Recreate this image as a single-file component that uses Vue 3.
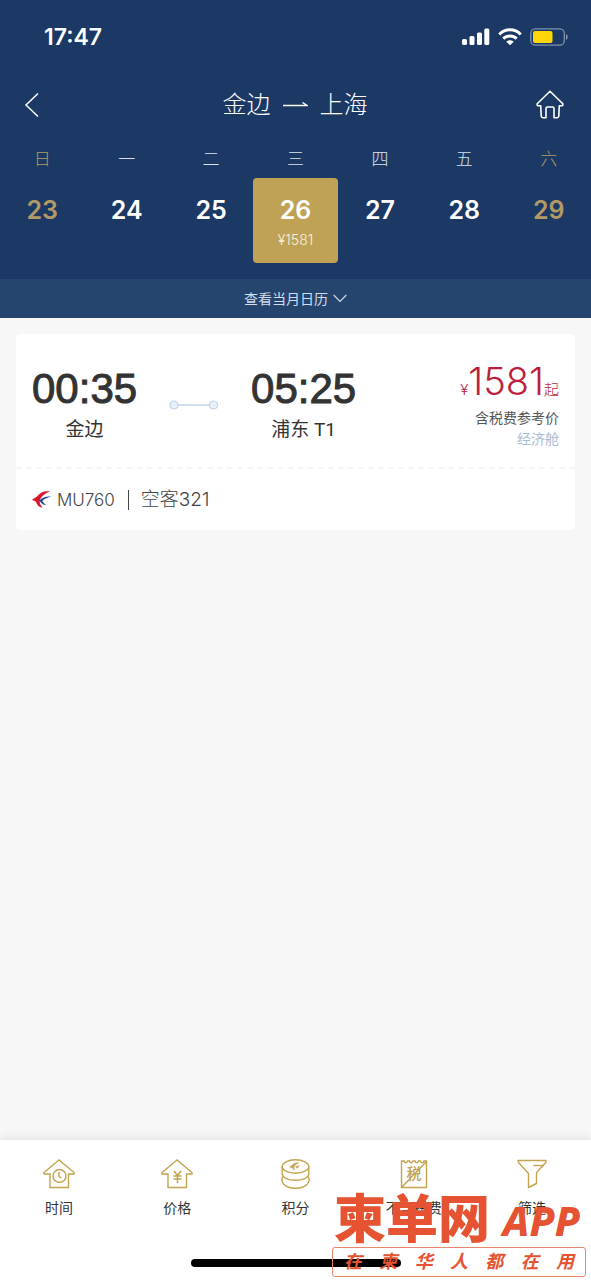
<script setup>
const days = [
  { week: '日', date: 23, weekend: true },
  { week: '一', date: 24 },
  { week: '二', date: 25 },
  { week: '三', date: 26, price: '¥1581', selected: true },
  { week: '四', date: 27 },
  { week: '五', date: 28 },
  { week: '六', date: 29, weekend: true }
]
const slogan = ['在', '柬', '华', '人', '都', '在', '用']
</script>

<template>
  <div class="page">
    <header class="top">
      <div class="status">
        <span class="clock">17:47</span>
        <span class="signals">
          <svg width="28" height="18" viewBox="0 0 28 18" fill="#fff">
            <rect x="0" y="11" width="5" height="6" rx="1.5" />
            <rect x="7.5" y="8" width="5" height="9" rx="1.5" />
            <rect x="15" y="4.500" width="5" height="12.500" rx="1.5" />
            <rect x="22.300" y="0.500" width="5" height="16.500" rx="1.5" />
          </svg>
          <svg width="24" height="18" viewBox="0 0 24 18" fill="none" stroke="#fff" stroke-width="3">
            <path d="M1.300 6.500C7.300 .3 16.700 .3 22.700 6.500" />
            <path d="M5.300 10.600C9 7 15 7 18.700 10.600" />
            <path d="M8.300 13.700C10.500 11.700 13.500 11.700 15.700 13.700L12 17.300Z" fill="#fff" stroke="none" />
          </svg>
          <svg width="39" height="18" viewBox="0 0 39 18">
            <rect x="0.800" y="0.800" width="33.500" height="16.400" rx="4.500" fill="none" stroke="#8091ac" stroke-width="1.300" />
            <rect x="3" y="3" width="19.500" height="12" rx="2" fill="#ffd60a" />
            <path d="M36 6C38.300 7 38.300 11 36 12Z" fill="#8091ac" />
          </svg>
        </span>
      </div>

      <nav class="nav">
        <button class="icon-button" type="button" aria-label="返回">
          <svg width="16" height="26" viewBox="0 0 16 26" fill="none" stroke="#fff" stroke-width="1.500">
            <path d="M14 1.500L2 13L14 24.500" />
          </svg>
        </button>
        <h1 class="title">
          <span>金边</span>
          <svg width="25" height="12" viewBox="0 0 25 12" fill="none" stroke="#fff" stroke-width="1.400">
            <path d="M0 6.500H24L19.500 3.500" />
          </svg>
          <span>上海</span>
        </h1>
        <button class="icon-button" type="button" aria-label="首页">
          <svg width="28" height="29" viewBox="0 0 28 29" fill="none" stroke="#fff" stroke-width="1.600" stroke-linejoin="round">
            <path d="M14 1.200L1.200 13.700Q.7 16 3 15.700H4.700L5.200 26Q5.300 27.700 7 27.700H10V18.500Q10 17 11.500 17H16.500Q18 17 18 18.500V27.700H21Q22.700 27.700 22.800 26L23.300 15.700H25Q27.300 16 26.800 13.700Z" />
          </svg>
        </button>
      </nav>

      <div class="calendar">
        <div v-for="day in days" :key="day.date" class="column">
          <span class="week" :class="{ gold: day.weekend }">{{ day.week }}</span>
          <button class="day" :class="{ gold: day.weekend, selected: day.selected }" type="button">
            <span class="date">{{ day.date }}</span>
            <span v-if="day.price" class="day-price">{{ day.price }}</span>
          </button>
        </div>
      </div>

      <button class="month" type="button">
        <span>查看当月日历</span>
        <svg width="14" height="9" viewBox="0 0 14 9" fill="none" stroke="#d3dcea" stroke-width="1.100">
          <path d="M.7 1L7 7.500L13.300 1" />
        </svg>
      </button>
    </header>

    <main class="results">
      <article class="flight">
        <div class="journey">
          <div class="stop">
            <span class="time">00:35</span>
            <span class="place">金边</span>
          </div>
          <svg class="route" width="50" height="10" viewBox="0 0 50 10" fill="#e8f1fb" stroke="#c0d0e6" stroke-width="1.200">
            <path d="M9 5H41" stroke="#ccd8e9" stroke-width="1.700" />
            <circle cx="5" cy="5" r="4" />
            <circle cx="44.500" cy="5" r="4" />
          </svg>
          <div class="stop">
            <span class="time">05:25</span>
            <span class="place">浦东 T1</span>
          </div>
          <div class="fare">
            <span class="amount"><small>¥</small><span>1581</span><small>起</small></span>
            <span class="note">含税费参考价</span>
            <span class="cabin">经济舱</span>
          </div>
        </div>
        <div class="plane">
          <svg width="20" height="17" viewBox="0 0 20 17">
            <path d="M18 0.500C12 -.3 8.500 1.200 5 5.500L0 8.800L4 10.700C5 14 7 16.500 10.500 16.500C8 14 7.300 11.500 8 8.800C9.500 4.800 13 2.500 18 .5Z" fill="#d9172c" />
            <path d="M19.500 5.500C13.500 5 9.300 6.800 7.500 9.500C8.500 12 11 14 14.500 14.300C12 12.500 10.500 11 10.500 9.800C12.500 7.500 16 6.500 19.500 5.500Z" fill="#22479a" />
          </svg>
          <span class="number">MU760</span>
          <span class="bar"></span>
          <span class="model">空客321</span>
        </div>
      </article>
    </main>

    <footer class="tabs">
      <div class="tab-row">
        <button class="tab" type="button">
          <svg class="tab-icon" viewBox="0 0 32 30">
            <path d="M16 1L1 13.500V15H7V28.500H25.500V15H31V13.500Z" />
            <circle cx="16.500" cy="17" r="6.500" />
            <path d="M16 13V17.500L18.500 19" />
          </svg>
          <span>时间</span>
        </button>
        <button class="tab" type="button">
          <svg class="tab-icon" viewBox="0 0 32 30">
            <path d="M16 1L1 13.500V15H7V28.500H25.500V15H31V13.500Z" />
            <path d="M13 12L16.500 16.500L20 12M16.500 16.500V24M12.500 17H20.500M12.500 20H20.500" stroke-width="1.500" />
          </svg>
          <span>价格</span>
        </button>
        <button class="tab" type="button">
          <svg class="tab-icon" viewBox="0 0 32 30">
            <ellipse cx="16.500" cy="7.500" rx="13.300" ry="6.700" />
            <path d="M3.200 7.500V14.500C3.200 23.500 29.800 23.500 29.800 14.500V7.500" />
            <path d="M3.800 17.500C1 22.500 5 29.300 16.500 29.300S32 22.500 29.200 17.500" />
            <path d="M20 3.800C15.500 3.600 14 5 12.500 7L10.500 8L13 8.700L15.500 11L14.800 8.300C15.500 6.500 17 5 20 3.800ZM20.500 6.500L16.500 7.800L18.500 9.500" fill="#c2a34f" stroke-width=".5" />
          </svg>
          <span>积分</span>
        </button>
        <button class="tab" type="button">
          <svg class="tab-icon" viewBox="0 0 32 30">
            <path d="M3.500 2H6C6.500 4.500 9 4.500 9.500 2H11.500C12 4.500 14.500 4.500 15 2H17C17.500 4.500 20 4.500 20.500 2H22.500C23 4.500 25.500 4.500 26 2H28.500V28.500H3.500ZM4 28L28 3" />
            <text x="16" y="20" text-anchor="middle" class="tax">税</text>
          </svg>
          <span>不含税费</span>
        </button>
        <button class="tab" type="button">
          <svg class="tab-icon" viewBox="0 0 32 30">
            <path d="M2 1.500H30L29.500 4L20.500 13.500V24.500L12.500 28.500V14.500L3 4Z" stroke-linejoin="round" />
            <path d="M17.500 6.500H28" />
          </svg>
          <span>筛选</span>
        </button>
      </div>
      <div class="home-indicator"></div>
    </footer>

    <aside class="brand">
      <div class="brand-name"><span class="brand-cn">柬单网</span><span class="brand-app">APP</span></div>
      <div class="slogan"><span v-for="(char, i) in slogan" :key="i">{{ char }}</span></div>
    </aside>
  </div>
</template>

<style>
body { background: #f7f7f7; }
</style>

<style scoped>
.page {
  position: relative;
  display: flex;
  flex-direction: column;
  min-height: 100vh;
  background: #f7f7f7;
  color: #333;
  font-family: Inter, "Noto Sans CJK SC", sans-serif;
}
button {
  margin: 0;
  padding: 0;
  border: 0;
  background: none;
  color: inherit;
  font: inherit;
}
svg { display: block; flex: none; }
.top { background: #1b3964; color: #fff; }
.status {
  display: flex;
  align-items: center;
  justify-content: space-between;
  height: 73px;
  padding: 0 22px 0 44px;
}
.clock { font-size: 23px; font-weight: 600; }
.signals { display: flex; align-items: center; gap: 8px; }
.nav {
  display: flex;
  align-items: center;
  justify-content: space-between;
  height: 63px;
  padding: 0 27px 0 24px;
}
.icon-button { display: flex; justify-content: center; min-width: 16px; }
.title {
  display: flex;
  align-items: center;
  gap: 12px;
  margin: 0 0 0 14px;
  font-size: 24px;
  font-weight: 300;
  line-height: 38px;
}
.calendar { display: grid; grid-template-columns: repeat(7, 1fr); padding: 9px 0 16px; }
.column { display: flex; flex-direction: column; gap: 5px; }
.week { font-size: 17px; font-weight: 300; line-height: 28px; text-align: center; color: #dce3ef; }
.day {
  display: flex;
  flex-direction: column;
  align-items: center;
  gap: 4px;
  height: 85px;
  padding-top: 16px;
  border-radius: 4px;
}
.selected { background: #bfa255; }
.gold { color: #b39a65; }
.date { font-size: 25px; font-weight: 600; line-height: 32px; }
.day-price { font-size: 14px; font-weight: 300; line-height: 20px; color: #f8f2df; }
.month {
  display: flex;
  align-items: center;
  justify-content: center;
  gap: 5px;
  width: 100%;
  height: 39px;
  background: #25456f;
  color: #d3dcea;
  font-size: 14px;
  line-height: 20px;
}
.results { flex: 1; padding: 16px; }
.flight { border-radius: 4px; background: #fff; }
.journey {
  display: flex;
  padding: 26px 16px 18px;
  border-bottom: 2px dashed #f5f5f5;
}
.stop { display: flex; flex-direction: column; align-items: center; padding-top: 4px; font-family: Roboto, "Noto Sans CJK SC", sans-serif; }
.time { font-family: "Liberation Sans", sans-serif; font-size: 42px; line-height: 50px; -webkit-text-stroke: 1px #333; }
.place { font-size: 19px; line-height: 32px; }
.route { margin: 40px 32px 0; }
.fare { display: flex; flex-direction: column; align-items: flex-end; margin-left: auto; }
.amount { display: flex; align-items: baseline; height: 47px; color: #bd1e3d; font-size: 38px; font-weight: 300; line-height: 42px; }
.amount small { font-size: 15px; line-height: 20px; }
.note { font-size: 14px; line-height: 22px; color: #555; }
.cabin { font-size: 14px; line-height: 20px; color: #a9bbd4; }
.plane { display: flex; align-items: center; height: 61px; padding: 0 16px; font-weight: 300; line-height: 28px; color: #444; }
.number { margin-left: 5px; font-size: 17px; }
.bar { width: 1px; height: 20px; margin: 0 12px 0 13px; background: #444; }
.model { font-size: 19px; line-height: 26px; }
.tabs { background: #fff; box-shadow: 0 -2px 10px rgba(0, 0, 0, 0.09); }
.tab-row { display: grid; grid-template-columns: repeat(5, 1fr); padding-top: 19px; }
.tab { display: flex; flex-direction: column; align-items: center; gap: 8px; font-size: 14px; line-height: 22px; }
.tab-icon { width: 32px; height: 30px; fill: none; stroke: #c2a34f; stroke-width: 1.4; }
.tax { fill: #c2a34f; stroke: none; font-size: 15px; font-weight: 500; }
.home-indicator { width: 210px; height: 8px; margin: 40px auto 13px; border-radius: 4px; background: #000; }
.brand {
  position: absolute;
  right: 5px;
  bottom: 3px;
  width: 254px;
  color: #e55332;
  pointer-events: none;
}
.brand-name { display: flex; align-items: center; justify-content: space-between; padding: 0 6px 0 2px; line-height: 54px; }
.brand-cn { font-size: 52px; font-weight: 900; }
.brand-app { font-family: "Noto Sans", sans-serif; font-size: 41px; font-style: italic; font-weight: 800; }
.slogan {
  display: flex;
  justify-content: space-between;
  padding: 0 11px;
  border: 1px solid #e98670;
  border-radius: 3px;
  font-size: 18px;
  font-style: italic;
  font-weight: 700;
  line-height: 28px;
}
</style>
